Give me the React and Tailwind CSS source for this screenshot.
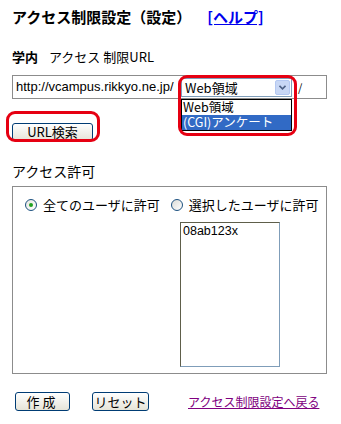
export default function App() {
  const jp = { fontFamily: '"Noto Sans CJK JP", "DejaVu Sans", sans-serif' }
  const btn =
    'rounded-[3px] border border-[#003c74] bg-gradient-to-b from-white to-[#e6e4d8] text-[13px] leading-none text-black'

  return (
    <div className="relative w-[341px] h-[424px] overflow-hidden bg-white px-3 text-black" style={jp}>
      {/* title */}
      <div className="flex items-end pt-[6px] h-[27px] whitespace-nowrap">
        <span className="text-[15px] font-bold leading-[20px]">アクセス制限設定（設定）</span>
        <a href="#" className="ml-[16px] text-[15px] font-bold leading-[20px] text-[#0000ee] underline">[ヘルプ]</a>
      </div>

      {/* url section */}
      <div className="mt-[21px] flex items-center h-[16px] text-[13px] leading-none whitespace-nowrap">
        <span className="font-bold">学内</span>
        <span className="ml-[11px]">アクセス 制限URL</span>
      </div>

      <div className="relative mt-[11px] flex h-[24px] w-[315px] items-center border border-[#8c8c8c] pl-[3px] whitespace-nowrap">
        <span className="w-[165px] font-['Liberation_Sans'] text-[13px]">http://vcampus.rikkyo.ne.jp/</span>
        <div className="flex h-[19px] w-[111px] items-center border border-[#7f9db9] bg-white pl-[3px]">
          <span className="flex-1 text-[13px] leading-none">Web領域</span>
          <span className="mr-[1px] flex h-[15px] w-[15px] items-center justify-center rounded-[2px] border border-[#b4c8f2] bg-[#c8d7f5]">
            <svg width="7" height="5" viewBox="0 0 7 5">
              <path d="M0.5 0.8 L3.5 3.8 L6.5 0.8" stroke="#4d6185" strokeWidth="1.6" fill="none" />
            </svg>
          </span>
        </div>
        <span className="relative z-30 ml-[6px] text-[11px]">/</span>

        {/* opened dropdown */}
        <div className="absolute left-[168px] top-[23px] z-10 w-[111px] border border-black bg-white text-[12.5px]">
          <div className="flex h-[15px] items-center pl-[1px] leading-none">Web領域</div>
          <div className="flex h-[15px] items-center bg-[#316ac5] pl-[1px] leading-none text-white">(CGI)アンケート</div>
        </div>
        {/* red highlight */}
        <div className="absolute left-[165px] top-[-1px] z-20 h-[61px] w-[119px] rounded-[9px] border-[3px] border-[#e60012]" />
      </div>

      <div className="relative mt-[19px] h-[18px]">
        <button className={`${btn} h-[18px] w-[81px]`}>URL検索</button>
        <div className="absolute left-[-6px] top-[-7px] h-[31px] w-[94px] rounded-[9px] border-[3px] border-[#e60012]" />
      </div>

      {/* access permission */}
      <div className="mt-[27px] text-[14px] leading-[16px]">アクセス許可</div>
      <div className="mt-[7px] h-[188px] w-[315px] border border-[#8c8c8c] pt-[11px]">
        <div className="flex items-center text-[13px] leading-none whitespace-nowrap">
          <span className="ml-[12px] flex h-[12px] w-[12px] items-center justify-center rounded-full border border-[#1c5180] bg-gradient-to-br from-[#e6e6e0] to-white">
            <span className="h-[4px] w-[4px] rounded-full bg-[#21a121]" />
          </span>
          <span className="ml-[6px]">全てのユーザに許可</span>
          <span className="ml-[11px] flex h-[12px] w-[12px] rounded-full border border-[#1c5180] bg-gradient-to-br from-[#dcdcd7] to-white" />
          <span className="ml-[6px]">選択したユーザに許可</span>
        </div>
        <div className="ml-[167px] mt-[11px] h-[145px] w-[100px] border border-[#7f9db9] border-t-[#5e5e4a] border-l-[#5e5e4a] px-[2px] pt-[1px] font-['Liberation_Sans'] text-[12.5px] leading-[14px]">
          08ab123x
        </div>
      </div>

      {/* bottom row */}
      <div className="mt-[18px] flex items-center whitespace-nowrap">
        <button className={`${btn} ml-[3px] h-[19px] w-[55px] tracking-[3px]`}>作成</button>
        <button className={`${btn} ml-[22px] h-[19px] w-[57px]`}>リセット</button>
        <a href="#" className="ml-[39px] text-[12px] leading-none text-[#800080] underline">アクセス制限設定へ戻る</a>
      </div>
    </div>
  )
}
